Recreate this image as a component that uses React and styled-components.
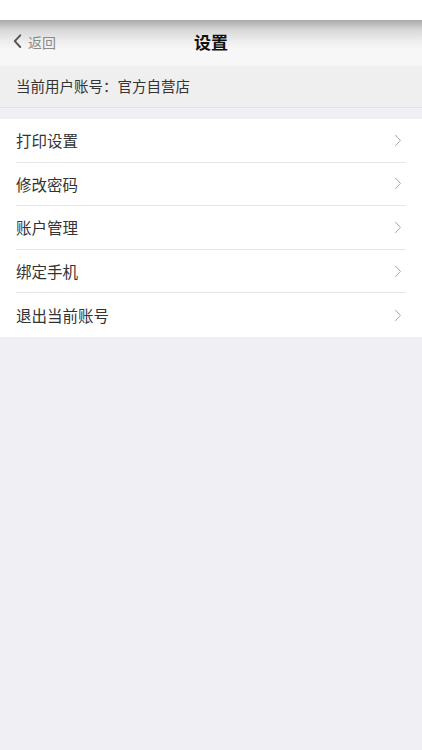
import React from "react";
import styled, { createGlobalStyle } from "styled-components";

const GlobalStyle = createGlobalStyle`
  html, body {
    margin: 0;
    padding: 0;
    background: #efeff4;
    font-family: "Noto Sans CJK SC", "Noto Sans", sans-serif;
  }
`;

const items = ["打印设置", "修改密码", "账户管理", "绑定手机", "退出当前账号"];

const Chevron = ({ size = 10, color = "#999", weight = 1.2, left }) => (
  <svg width={size} height={size * 1.6} viewBox="0 0 10 16" fill="none">
    <path
      d={left ? "M8 1.5 L2 8 L8 14.5" : "M2 1.5 L8 8 L2 14.5"}
      stroke={color}
      strokeWidth={weight}
      strokeLinecap="round"
      strokeLinejoin="round"
    />
  </svg>
);

const Settings = () => {
  return (
    <Page>
      <StatusBar />
      <NavBar>
        <BackButton>
          <Chevron left size={9} color="#555" weight={2.2} />
          <span>返回</span>
        </BackButton>
        <Title>设置</Title>
      </NavBar>
      <AccountBar>当前用户账号：官方自营店</AccountBar>
      <List>
        {items.map((item, i) => (
          <Row key={item} last={i === items.length - 1}>
            <RowLabel>{item}</RowLabel>
            <Chevron size={8} color="#9a9a9a" weight={1.1} />
          </Row>
        ))}
      </List>
    </Page>
  );
};

const Page = styled.div`
  min-height: 750px;
  background: #efeff4;
`;

const StatusBar = styled.div`
  height: 20px;
  background: #ffffff;
`;

const NavBar = styled.div`
  height: 46px;
  box-sizing: border-box;
  padding-bottom: 3px;
  position: relative;
  display: flex;
  align-items: center;
  justify-content: center;
  background: linear-gradient(
    to bottom,
    #a9a9a9 0px,
    #d8d8d8 10px,
    #efefef 22px,
    #f7f7f7 30px,
    #f7f7f7 100%
  );
`;

const BackButton = styled.div`
  position: absolute;
  left: 13px;
  top: 0;
  bottom: 3px;
  display: flex;
  align-items: center;
  gap: 6px;
  color: #8a8a8a;
  font-size: 14px;
`;

const Title = styled.div`
  font-size: 17px;
  font-weight: 700;
  color: #111;
`;

const AccountBar = styled.div`
  height: 42px;
  box-sizing: border-box;
  padding: 0 16px 2px;
  display: flex;
  align-items: center;
  background: #efefef;
  border-bottom: 1px solid #e2e2e6;
  font-size: 14.5px;
  color: #333;
`;

const List = styled.div`
  margin-top: 11px;
  background: #ffffff;
  padding-left: 16px;
`;

const Row = styled.div`
  height: 43.6px;
  display: flex;
  align-items: center;
  justify-content: space-between;
  margin-right: 16px;
  padding-right: 4px;
  box-sizing: border-box;
  border-bottom: ${(p) => (p.last ? "none" : "1px solid #e6e6e6")};
`;

const RowLabel = styled.span`
  font-size: 15.5px;
  color: #333;
`;

export default function App() {
  return (
    <>
      <GlobalStyle />
      <Settings />
    </>
  );
}
